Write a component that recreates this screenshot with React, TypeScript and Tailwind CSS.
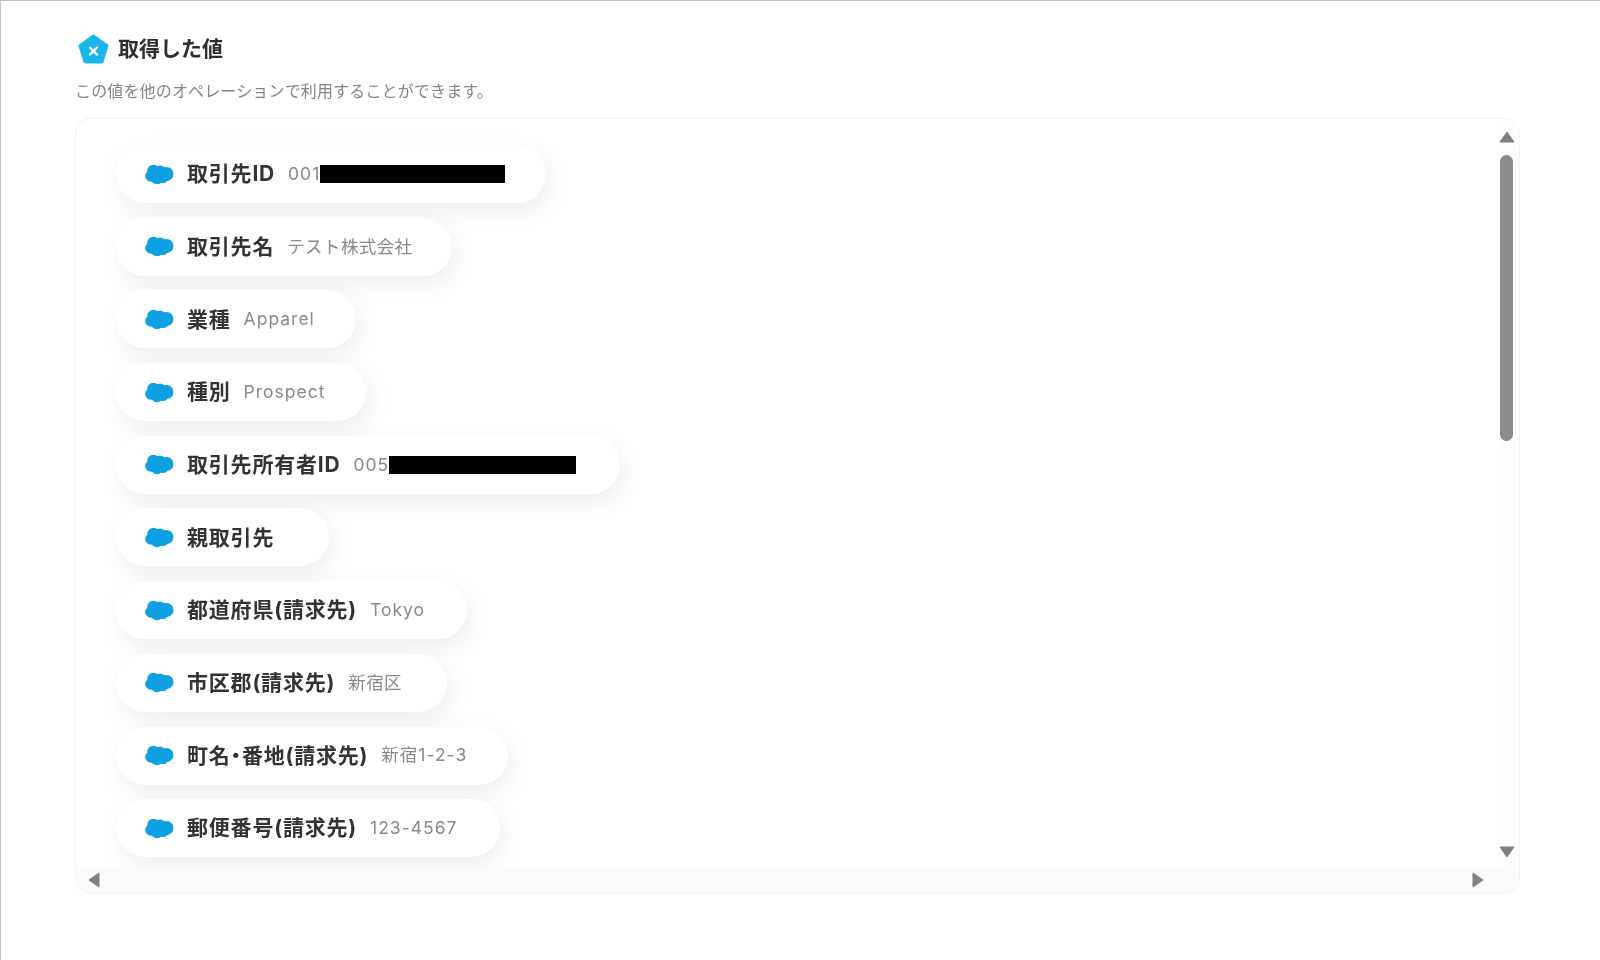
const FIELDS = [
  { label: '取引先ID', value: '001', latin: true, redact: 'w-[185px]', width: 'w-[430px]' },
  { label: '取引先名', value: 'テスト株式会社', width: 'w-[336px]' },
  { label: '業種', value: 'Apparel', latin: true, width: 'w-[240px]' },
  { label: '種別', value: 'Prospect', latin: true, width: 'w-[250px]' },
  { label: '取引先所有者ID', value: '005', latin: true, redact: 'w-[187px]', width: 'w-[504px]' },
  { label: '親取引先', value: '', width: 'w-[213px]' },
  { label: '都道府県(請求先)', value: 'Tokyo', latin: true, width: 'w-[351px]' },
  { label: '市区郡(請求先)', value: '新宿区', width: 'w-[331px]' },
  { label: '町名・番地(請求先)', value: '新宿1-2-3', latin: true, width: 'w-[392px]' },
  { label: '郵便番号(請求先)', value: '123-4567', latin: true, width: 'w-[384px]' },
];

function CloudIcon() {
  return (
    <svg width="29" height="21" viewBox="0 0 29 21" className="shrink-0" fill="#0ea0e2">
      <ellipse cx="14" cy="10.5" rx="12" ry="7.5" />
      <circle cx="8.5" cy="7" r="6.2" />
      <circle cx="15" cy="7" r="5.5" />
      <circle cx="21.5" cy="10" r="7" />
      <circle cx="6" cy="12" r="5.8" />
      <circle cx="12" cy="14" r="6.2" />
      <circle cx="18" cy="13.5" r="5.5" />
    </svg>
  );
}

function PentagonIcon() {
  return (
    <svg width="31" height="31" viewBox="0 0 30 30" className="shrink-0">
      <path
        d="M15 2.5 L27.5 11.5 L22.8 26.5 L7.2 26.5 L2.5 11.5 Z"
        fill="#18b6ea"
        stroke="#18b6ea"
        strokeWidth="4"
        strokeLinejoin="round"
      />
      <path d="M11.5 13 L18.5 20 M18.5 13 L11.5 20" stroke="#fff" strokeWidth="2.2" strokeLinecap="round" />
    </svg>
  );
}

function Arrow({ dir }: { dir: 'up' | 'down' | 'left' | 'right' }) {
  const points = {
    up: '8,1 15,11 1,11',
    down: '1,1 15,1 8,11',
    left: '12,1 12,15 2,8',
    right: '2,1 2,15 12,8',
  }[dir];
  return (
    <svg width="16" height="16" viewBox="0 0 16 16" className="block shrink-0">
      <polygon points={points} fill="#808080" stroke="#808080" strokeWidth="1" strokeLinejoin="round" />
    </svg>
  );
}

function FieldPill({ field }: { field: (typeof FIELDS)[number] }) {
  return (
    <div
      className={`flex h-[58px] shrink-0 items-center rounded-full bg-white pl-[29px] shadow-[4px_8px_24px_rgba(0,0,0,0.07)] ${field.width}`}
    >
      <CloudIcon />
      <span className="ml-[13px] whitespace-nowrap text-[21px] font-bold tracking-[0.8px] text-[#333333] [font-feature-settings:'palt']">
        {field.label}
      </span>
      {field.value && (
        <span
          className={`ml-[13px] whitespace-nowrap text-[17.5px] text-[#8a8a8a] ${
            field.latin ? 'tracking-[1px]' : 'tracking-[0.4px]'
          }`}
        >
          {field.value}
        </span>
      )}
      {field.redact && <span className={`h-[18px] bg-black ${field.redact}`} />}
    </div>
  );
}

export default function App() {
  return (
    <div className="h-[960px] w-full overflow-hidden border-l border-t border-[#c4c4c4] bg-white font-['Inter','Noto_Sans_CJK_JP',sans-serif] blur-[0.5px]">
      <div className="pl-[74px] pr-[80px] pt-[33px]">
        <div className="flex h-[31px] items-center gap-[9px] pl-[3px]">
          <PentagonIcon />
          <h2 className="-translate-y-[1px] text-[21px] font-bold text-[#2f2f2f]">取得した値</h2>
        </div>
        <p className="mt-[14px] text-[16px] leading-[24px] tracking-[0.15px] text-[#858585]">
          この値を他のオペレーションで利用することができます。
        </p>
        <div className="mt-[15px] flex h-[776px] w-[1445px] flex-col overflow-hidden rounded-[16px] border border-[#f2f2f2]">
          <div className="flex min-h-0 flex-1">
            <div className="flex min-w-0 flex-1 flex-col gap-[14.7px] overflow-hidden pl-[40px] pt-[26px]">
              {FIELDS.map((f) => (
                <FieldPill key={f.label} field={f} />
              ))}
            </div>
            <div className="flex w-[22px] shrink-0 flex-col items-center bg-[#fdfdfd] pr-[3px] pt-[12px]">
              <Arrow dir="up" />
              <div className="mt-[8px] h-[286px] w-[13px] rounded-full bg-[#8c8c8c]" />
              <div className="mt-auto mb-[5px]">
                <Arrow dir="down" />
              </div>
            </div>
          </div>
          <div className="flex h-[26px] shrink-0 items-center justify-between bg-[#fbfbfb] pl-[11px] pr-[32px]">
            <Arrow dir="left" />
            <Arrow dir="right" />
          </div>
        </div>
      </div>
    </div>
  );
}
